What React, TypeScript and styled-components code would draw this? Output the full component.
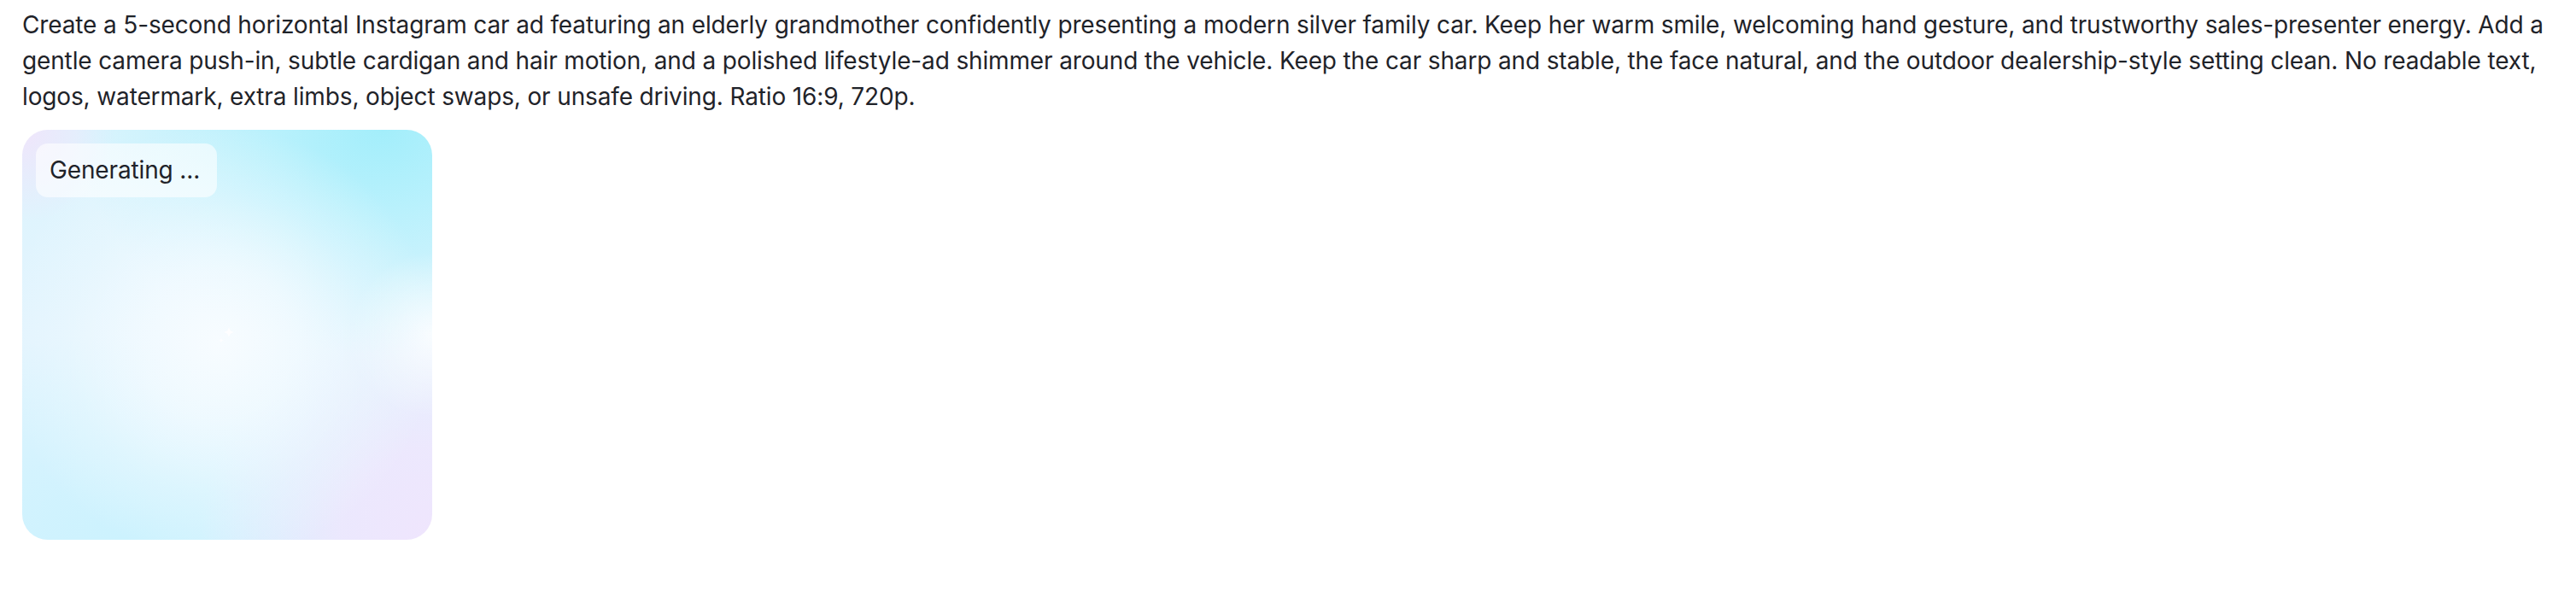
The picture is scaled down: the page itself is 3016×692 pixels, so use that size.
import React from 'react';
import styled, {createGlobalStyle} from "styled-components";

const GlobalStyle = createGlobalStyle`
  html, body {
    margin: 0;
    padding: 0;
    background: #ffffff;
  }
  body {
    font-family: Inter, "Liberation Sans", Arial, sans-serif;
    color: #1f2329;
  }
`

const PageSC = styled('div')`
  padding: 8px 26px 26px 26px;
  display: flex;
  flex-direction: column;
  gap: 18px;
`

const PromptSC = styled('p')`
  margin: 0;
  font-size: 28px;
  line-height: 42px;
  letter-spacing: -0.14px;
  color: #1f2329;
`

const PreviewCardSC = styled('div')`
  position: relative;
  width: 480px;
  height: 480px;
  border-radius: 30px;
  overflow: hidden;
  display: flex;
  align-items: flex-start;
  justify-content: flex-start;
  padding: 16px;
  box-sizing: border-box;
  background:
    radial-gradient(circle at 48% 52%, rgba(247, 252, 255, 1) 0%, rgba(244, 251, 255, 0.8) 25%, rgba(240, 250, 255, 0.35) 50%, rgba(240, 250, 255, 0) 72%),
    radial-gradient(circle at 100% 50%, rgba(255, 255, 255, 0.8) 0%, rgba(255, 255, 255, 0) 18%),
    radial-gradient(ellipse 75% 55% at 88% 0%, #a3eefb 0%, rgba(172, 240, 252, 0.75) 35%, rgba(190, 244, 253, 0) 100%),
    radial-gradient(circle at 100% 100%, #efe5fd 0%, rgba(239, 230, 253, 0.85) 16%, rgba(239, 230, 253, 0) 40%),
    radial-gradient(circle at 0% 0%, #f0e5fb 0%, rgba(240, 229, 251, 0) 16%),
    radial-gradient(ellipse 90% 50% at 25% 100%, #ccf2fe 0%, rgba(204, 242, 254, 0) 100%),
    linear-gradient(180deg, #dcf4fd 0%, #e3f4fe 50%, #dcf4fe 100%);
`

const StatusBadgeSC = styled('div')`
  padding: 10px 20px 11px 16px;
  border-radius: 14px;
  background: rgba(255, 255, 255, 0.6);
  font-size: 28px;
  line-height: 42px;
  letter-spacing: -0.14px;
  color: #1f2329;
`

const SparkleSC = styled('svg')`
  position: absolute;
  left: 224px;
  top: 226px;
  width: 30px;
  height: 30px;
  opacity: 0.9;
`

const Sparkle = () => (
    <SparkleSC viewBox="0 0 30 30">
        <path d="M18 4 C18.6 9 20 10.4 25 11 C20 11.6 18.6 13 18 18 C17.4 13 16 11.6 11 11 C16 10.4 17.4 9 18 4 Z" fill="#ffffff"/>
        <path d="M9 17 C9.3 19.5 10 20.2 12.5 20.5 C10 20.8 9.3 21.5 9 24 C8.7 21.5 8 20.8 5.5 20.5 C8 20.2 8.7 19.5 9 17 Z" fill="#ffffff" opacity="0.8"/>
    </SparkleSC>
)

export default function App() {
    return (
        <PageSC>
            <GlobalStyle/>
            <PromptSC>
                Create a 5-second horizontal Instagram car ad featuring an elderly grandmother confidently presenting a modern silver family car. Keep her warm smile, welcoming hand gesture, and trustworthy sales-presenter energy. Add a gentle camera push-in, subtle cardigan and hair motion, and a polished lifestyle-ad shimmer around the vehicle. Keep the car sharp and stable, the face natural, and the outdoor dealership-style setting clean. No readable text, logos, watermark, extra limbs, object swaps, or unsafe driving. Ratio 16:9, 720p.
            </PromptSC>
            <PreviewCardSC>
                <StatusBadgeSC>Generating ...</StatusBadgeSC>
                <Sparkle/>
            </PreviewCardSC>
        </PageSC>
    );
}
